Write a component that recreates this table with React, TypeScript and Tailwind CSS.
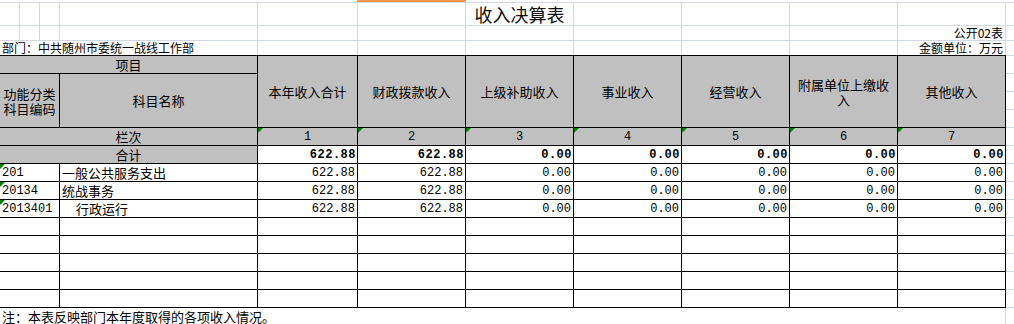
const TOP_COLS = "grid grid-cols-[20px_20px_20px_198px_100px_108px_108px_108px_108px_108px_108px_8px]";
const MAIN_COLS = "grid grid-cols-[60px_198px_100px_108px_108px_108px_108px_108px_108px_8px] grid-rows-[18px_54px_repeat(10,18px)]";

const cell = "border-r border-b border-black";
const gray = "bg-[#C0C0C0]";
const mono = "font-['Liberation_Mono',monospace]";

const incomeCols = [
  "本年收入合计",
  "财政拨款收入",
  "上级补助收入",
  "事业收入",
  "经营收入",
  "附属单位上缴收入",
  "其他收入",
];

const rows = [
  { code: "201", name: "一般公共服务支出", indent: false, values: ["622.88", "622.88", "0.00", "0.00", "0.00", "0.00", "0.00"] },
  { code: "20134", name: "统战事务", indent: false, values: ["622.88", "622.88", "0.00", "0.00", "0.00", "0.00", "0.00"] },
  { code: "2013401", name: "行政运行", indent: true, values: ["622.88", "622.88", "0.00", "0.00", "0.00", "0.00", "0.00"] },
];

const totals = ["622.88", "622.88", "0.00", "0.00", "0.00", "0.00", "0.00"];

function Flag() {
  return (
    <svg className="absolute left-0 top-0" width="5" height="5" viewBox="0 0 5 5">
      <polygon points="0,0 5,0 0,5" fill="#008000" />
    </svg>
  );
}

function Ext({ tall = false }: { tall?: boolean }) {
  if (tall) {
    return (
      <div className="flex flex-col">
        <div className="h-[18px] border-b border-[#D0D7E5]" />
        <div className="h-[18px] border-b border-[#D0D7E5]" />
        <div className="h-[18px] border-b border-[#D0D7E5]" />
      </div>
    );
  }
  return <div className="border-b border-[#D0D7E5]" />;
}

export default function App() {
  return (
    <div className="h-[324px] w-[1014px] overflow-hidden bg-white font-['Noto_Sans_CJK_SC','Liberation_Sans',sans-serif] text-black">
      {/* sheet strip above the table */}
      <div className="flex h-[2px]">
        <div className="w-[357px]" />
        <div className="w-[109px] bg-[#F79646]" />
      </div>

      <div className={`${TOP_COLS} h-[24px] border-t border-b border-[#D0D7E5]`}>
        {Array.from({ length: 12 }).map((_, i) => (
          <div
            key={i}
            className={`flex items-center justify-center ${i < 11 ? "border-r border-[#D0D7E5]" : ""}`}
          >
            {i === 6 ? <span className="whitespace-nowrap text-[18px] leading-[22px] text-[#111]">收入决算表</span> : null}
          </div>
        ))}
      </div>

      <div className={`${TOP_COLS} h-[15px] border-b border-[#D0D7E5]`}>
        {Array.from({ length: 12 }).map((_, i) => (
          <div
            key={i}
            className={`flex items-center justify-end pr-[2px] ${i < 11 ? "border-r border-[#D0D7E5]" : ""}`}
          >
            {i === 10 ? <span className="whitespace-nowrap text-[12px] leading-[14px]">公开02表</span> : null}
          </div>
        ))}
      </div>

      <div className={`${TOP_COLS} h-[14px]`}>
        <div className="col-span-4 flex items-center border-r border-[#D0D7E5] pl-[2px]">
          <span className="whitespace-nowrap text-[12px] leading-[14px]">部门：中共随州市委统一战线工作部</span>
        </div>
        {Array.from({ length: 8 }).map((_, i) => (
          <div
            key={i}
            className={`flex items-center justify-end pr-[2px] ${i < 7 ? "border-r border-[#D0D7E5]" : ""}`}
          >
            {i === 6 ? <span className="whitespace-nowrap text-[12px] leading-[14px]">金额单位：万元</span> : null}
          </div>
        ))}
      </div>

      <div className="flex h-px">
        <div className="w-[1006px] bg-black" />
        <div className="w-[8px] bg-[#D0D7E5]" />
      </div>

      {/* main table */}
      <div className={`${MAIN_COLS} text-[13px] leading-[16px]`}>
        <div className={`col-span-2 ${cell} ${gray} flex items-center justify-center`}>项目</div>
        {incomeCols.map((label, i) => (
          <div key={label} className={`row-span-2 ${cell} ${gray} flex items-center justify-center text-center`}>
            {i === 5 ? (
              <div className="flex flex-col items-center leading-[15px]">
                <span>附属单位上缴收</span>
                <span>入</span>
              </div>
            ) : (
              label
            )}
          </div>
        ))}
        <div className="row-span-2">
          <div className="h-[18px] border-b border-[#D0D7E5]" />
          <Ext tall />
        </div>
        <div className={`${cell} ${gray} flex flex-col items-center justify-center leading-[15px]`}>
          <span>功能分类</span>
          <span>科目编码</span>
        </div>
        <div className={`${cell} ${gray} flex items-center justify-center`}>科目名称</div>

        {/* 栏次 */}
        <div className={`col-span-2 ${cell} ${gray} flex items-center justify-center`}>栏次</div>
        {incomeCols.map((label, i) => (
          <div key={label} className={`relative ${cell} ${gray} ${mono} flex items-center justify-center text-[12px]`}>
            <Flag />
            {i + 1}
          </div>
        ))}
        <Ext />

        {/* 合计 */}
        <div className={`col-span-2 ${cell} ${gray} flex items-center justify-center`}>合计</div>
        {totals.map((v, i) => (
          <div key={i} className={`${cell} ${mono} flex items-center justify-end pr-[1px] text-[12px] font-bold tracking-[0.5px]`}>
            {v}
          </div>
        ))}
        <Ext />

        {rows.map((r) => (
          <div key={r.code} className="contents">
            <div className={`relative ${cell} ${mono} flex items-center pl-[2px] text-[12px]`}>
              <Flag />
              {r.code}
            </div>
            <div className={`${cell} flex items-center whitespace-nowrap ${r.indent ? "pl-[16px]" : "pl-[2px]"}`}>
              {r.name}
            </div>
            {r.values.map((v, i) => (
              <div key={i} className={`${cell} ${mono} flex items-center justify-end pr-[2px] text-[12px]`}>
                {v}
              </div>
            ))}
            <Ext />
          </div>
        ))}

        {Array.from({ length: 5 }).map((_, ri) => (
          <div key={ri} className="contents">
            {Array.from({ length: 9 }).map((_, ci) => (
              <div key={ci} className={cell} />
            ))}
            <Ext />
          </div>
        ))}
      </div>

      <div className="flex h-[17px] w-[1006px] items-center border-r border-[#D0D7E5] pl-[2px]">
        <span className="whitespace-nowrap text-[13px] leading-[16px]">注：本表反映部门本年度取得的各项收入情况。</span>
      </div>
    </div>
  );
}
